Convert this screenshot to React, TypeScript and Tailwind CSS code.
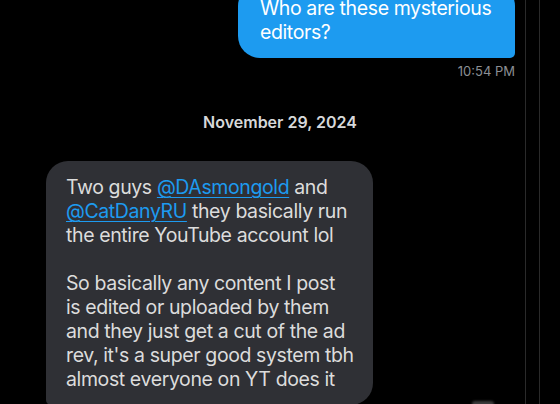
const mentionClass = 'text-[#1d9bf0] underline decoration-1 underline-offset-[3px]';

const App = () => {
  return (
    <div className="relative w-[560px] h-[404px] overflow-hidden bg-black font-['Inter',sans-serif]">
      {/* sent message */}
      <div className="flex flex-col items-end pr-[45px]">
        <div className="-mt-[16px] w-[277px] whitespace-nowrap rounded-[22px] rounded-br-[5px] bg-[#1d9bf0] pl-[22px] pt-3 pb-[14px] text-[19.5px] leading-[24px] tracking-[-0.02em] text-white">
          Who are these mysterious
          <br />
          editors?
        </div>
        <div className="mt-[5px] text-[13px] leading-[16px] text-[#8b8f94]">10:54 PM</div>
      </div>

      {/* date separator */}
      <div className="mt-[34px] text-center text-[16px] font-semibold leading-[18px] text-[#d6d8da]">
        November 29, 2024
      </div>

      {/* received message */}
      <div className="pl-[46px] mt-[30px]">
        <div className="w-[327px] whitespace-nowrap rounded-[22px] rounded-bl-[5px] bg-[#2f3035] pl-[20px] pt-[14px] pb-[14px] text-[19.5px] leading-[24px] tracking-[-0.02em] text-[#dcdcdc]">
          Two guys <span className={mentionClass}>@DAsmongold</span> and
          <br />
          <span className={mentionClass}>@CatDanyRU</span> they basically run
          <br />
          the entire YouTube account lol
          <br />
          <br />
          So basically any content I post
          <br />
          is edited or uploaded by them
          <br />
          and they just get a cut of the ad
          <br />
          rev, it's a super good system tbh
          <br />
          almost everyone on YT does it
        </div>
      </div>

      {/* thin vertical guide lines on the right */}
      <div className="absolute top-0 bottom-0 left-[525px] w-px bg-[#2a2a2a]" />
      <div className="absolute top-0 bottom-0 left-[539px] w-px bg-[#2a2a2a]" />

      {/* faint glow at the bottom */}
      <div className="absolute left-[472px] top-[401px] h-[6px] w-[22px] rounded-full bg-[#3a3a3a] blur-[1px]" />
    </div>
  );
};

export default App;
